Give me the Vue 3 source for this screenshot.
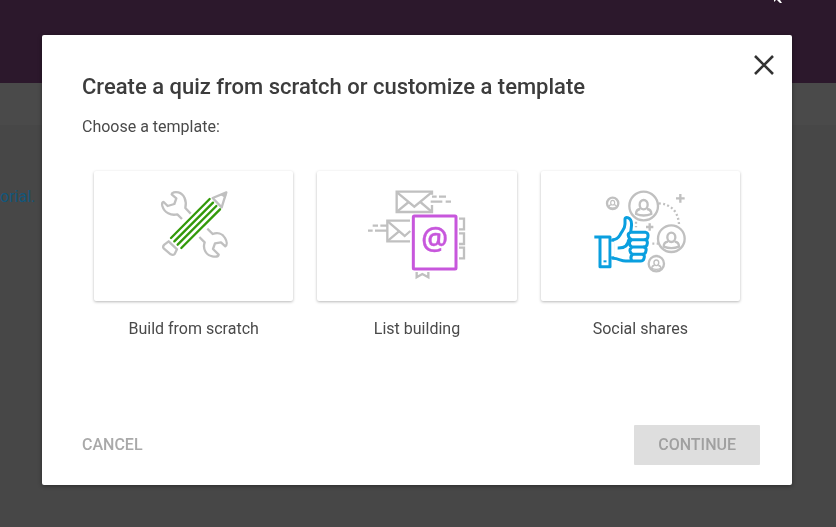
<script setup>
import { ref } from 'vue'

const open = ref(true)
const selected = ref(null)

const templates = [
  { id: 'scratch', label: 'Build from scratch' },
  { id: 'list', label: 'List building' },
  { id: 'social', label: 'Social shares' },
]

const people = [
  { id: 'top', x: 175, y: 78, r: 43, scale: 1 },
  { id: 'right', x: 258, y: 176, r: 40, scale: 1 },
  { id: 'left', x: 82, y: 70, r: 17, scale: 0.5 },
  { id: 'bottom', x: 213, y: 251, r: 23, scale: 0.6 },
]
</script>

<template>
  <div class="page">
    <header class="page-header"></header>
    <div class="page-toolbar"></div>
    <main class="page-body">
      <a href="#" class="page-link">orial.</a>
    </main>
  </div>

  <div v-if="open" class="overlay">
    <section class="dialog" role="dialog" aria-modal="true" aria-labelledby="dialog-title">
      <button type="button" class="close" aria-label="Close" @click="open = false">
        <svg viewBox="0 0 22 22" width="22" height="22">
          <path d="M2 2L20 20M20 2L2 20" />
        </svg>
      </button>

      <h1 id="dialog-title" class="title">Create a quiz from scratch or customize a template</h1>
      <p class="subtitle">Choose a template:</p>

      <div class="templates">
        <button
          v-for="item in templates"
          :key="item.id"
          type="button"
          class="template"
          :aria-pressed="selected === item.id"
          @click="selected = item.id"
        >
          <span class="card">
            <svg v-if="item.id === 'scratch'" class="art" viewBox="-49 -27 360 390">
              <g class="gray">
                <path d="M95 117L81 103C62 108 42 98 36 78C34 70 36 66 40 66L52 78L72 72L78 55L64 43C64 37 74 35 84 37C101 41 110 62 105 84L121 101" />
                <path d="M147 171L163 187C156 207 168 226 186 229C196 231 204 229 205 224L188 207L194 190L212 187L225 199C231 195 230 184 224 174C216 160 201 157 187 162L171 146" />
                <path d="M55 184L80 208L73 222Q68 227 61 223L40 205Q36 200 42 194Z" />
                <path d="M228 37L187 54L214 82Z" />
                <path class="gray-fill" d="M230 35L209 44L226 55Z" />
              </g>
              <g class="green">
                <path d="M62 174L178 57" />
                <path d="M72 184L188 68" />
                <path d="M82 194L198 78" />
                <path d="M93 204L209 88" />
              </g>
            </svg>

            <svg v-else-if="item.id === 'list'" class="art" viewBox="-9 -27 360 390">
              <g class="gray square">
                <path d="M216 44V35H110V96H216V75" />
                <path d="M112 38L163 80L214 38M112 94L146 66M214 94L181 66" />
                <path d="M216 50H230M237 50H258M212 65H247M257 65H273" />
                <path d="M150 122H82V184H150" />
                <path d="M84 125L134 168L151 153M84 182L117 154" />
                <path d="M38 137H54M61 137H82M24 152H38M45 152H82" />
                <path d="M297 116H312V148H297M297 160H312V192H297M297 203H312V235H297" />
                <path d="M170 276V292L187 282L205 292V276" />
              </g>
              <rect class="book" x="160" y="108" width="128" height="159" rx="3" />
              <text class="at" x="224" y="207">@</text>
            </svg>

            <svg v-else class="art" viewBox="-16 -27 360 390">
              <g class="gray">
                <g v-for="p in people" :key="p.id">
                  <circle :cx="p.x" :cy="p.y" :r="p.r" />
                  <g :transform="`translate(${p.x} ${p.y}) scale(${p.scale})`">
                    <ellipse cx="0" cy="-4" rx="12" ry="14" />
                    <path d="M-10 9C-19 10 -23 15 -23 24Q0 33 23 24C23 15 19 10 10 9" />
                  </g>
                </g>
                <path d="M285 42V68M272 55H298M193 130V152M182 141H204" />
                <path class="dots" d="M220 70Q276 74 281 132M152 125V142M201 191H218" />
              </g>
              <g class="blue">
                <path class="hand" d="M82 179C94 179 99 174 104 165C111 151 119 148 119 132V117Q120 112 127 113C137 116 140 127 138 141L136 157H181Q189 159 188 168Q188 178 179 179Q187 181 186 190Q185 200 176 201Q184 203 182 212Q181 222 173 223Q179 226 176 235Q174 243 166 243H121C106 243 101 235 82 235Z" />
                <path d="M136 157Q127 160 129 167Q131 177 140 179H180M140 179Q130 184 133 193Q135 200 141 201H177M141 201Q133 205 134 213Q136 222 143 223H173M143 223Q133 229 139 241M97 204C119 205 129 196 130 178" />
                <path d="M27 171H74V260H44V171" />
                <path d="M59 241V247" />
              </g>
              <path class="cover" d="M83 185V229" />
            </svg>
          </span>
          <span class="label">{{ item.label }}</span>
        </button>
      </div>

      <footer class="actions">
        <button type="button" class="cancel" @click="open = false">CANCEL</button>
        <button type="button" class="continue" :disabled="!selected">CONTINUE</button>
      </footer>
    </section>
  </div>

  <svg class="cursor" viewBox="0 0 12 4" width="12" height="4" aria-hidden="true">
    <path d="M3 0H5L3 2ZM6 0H9L11 3H9Z" />
  </svg>
</template>

<style>
body {
  margin: 0;
  background: #474747;
}
</style>

<style scoped>
.page,
.overlay,
button {
  font-family: Roboto, 'Liberation Sans', sans-serif;
}

.page-header {
  height: 83px;
  background: #2c182c;
}

.page-toolbar {
  height: 42px;
  background: #4a4a4a;
}

.page-body {
  padding-top: 62px;
}

.page-link {
  color: #12567a;
  font-size: 16px;
  line-height: 20px;
  text-decoration: none;
}

.overlay {
  position: fixed;
  inset: 0;
  box-sizing: border-box;
  display: flex;
  padding: 35px 44px 42px 42px;
}

.dialog {
  position: relative;
  box-sizing: border-box;
  flex: 1;
  display: flex;
  flex-direction: column;
  padding: 37px 32px 20px 40px;
  background: #fff;
  border-radius: 2px;
  box-shadow: 0 1px 4px rgba(0, 0, 0, 0.4);
}

button {
  margin: 0;
  padding: 0;
  border: 0;
  background: none;
  cursor: pointer;
}

.close {
  position: absolute;
  top: 19px;
  right: 17px;
  display: flex;
}

.close svg {
  fill: none;
  stroke: #333;
  stroke-width: 2.6;
}

.title {
  margin: 0;
  color: #3c3c3c;
  font-size: 22px;
  font-weight: 500;
  line-height: 30px;
}

.subtitle {
  margin: 15px 0 0;
  color: #4a4a4a;
  font-size: 16px;
  line-height: 20px;
}

.templates {
  display: grid;
  grid-template-columns: repeat(3, 1fr);
  gap: 24px;
  margin: 34px 20px 0 12px;
}

.template {
  display: flex;
  flex-direction: column;
  gap: 18px;
}

.card {
  width: 100%;
  display: flex;
  justify-content: center;
  border-radius: 2px;
  box-shadow: 0 1px 3px rgba(0, 0, 0, 0.28);
}

.label {
  width: 100%;
  color: #4a4a4a;
  font-size: 16px;
  line-height: 20px;
  text-align: center;
}

.art {
  width: 120px;
  height: 130px;
  fill: none;
  stroke-linejoin: round;
}

.gray {
  stroke: #c0c0c0;
  stroke-width: 7;
}

.gray.square {
  stroke-linejoin: miter;
}

.gray-fill {
  fill: #c0c0c0;
  stroke: none;
}

.green {
  stroke: #339a09;
  stroke-width: 7;
  stroke-linecap: round;
}

.book {
  fill: #fff;
  stroke: #c757dc;
  stroke-width: 9;
}

.at {
  fill: #c757dc;
  stroke: #c757dc;
  stroke-width: 1;
  font-family: 'Open Sans', 'Noto Sans', sans-serif;
  font-size: 90px;
  font-weight: 600;
  text-anchor: middle;
}

.dots {
  stroke-dasharray: 6 7;
}

.blue {
  stroke: #0a9fdf;
  stroke-width: 9;
}

.hand {
  fill: #fff;
}

.cover {
  stroke: #fff;
  stroke-width: 10;
}

.actions {
  display: flex;
  align-items: center;
  justify-content: space-between;
  margin-top: auto;
}

.cancel,
.continue {
  height: 40px;
  padding-bottom: 2px;
  color: #a9a9a9;
  font-size: 16px;
  font-weight: 500;
}

.continue {
  padding-right: 24px;
  padding-left: 24px;
  color: #a0a0a0;
  background: #dedede;
  border-radius: 1px;
}

.cursor {
  position: absolute;
  top: 0;
  right: 53px;
  fill: #fff;
}
</style>
